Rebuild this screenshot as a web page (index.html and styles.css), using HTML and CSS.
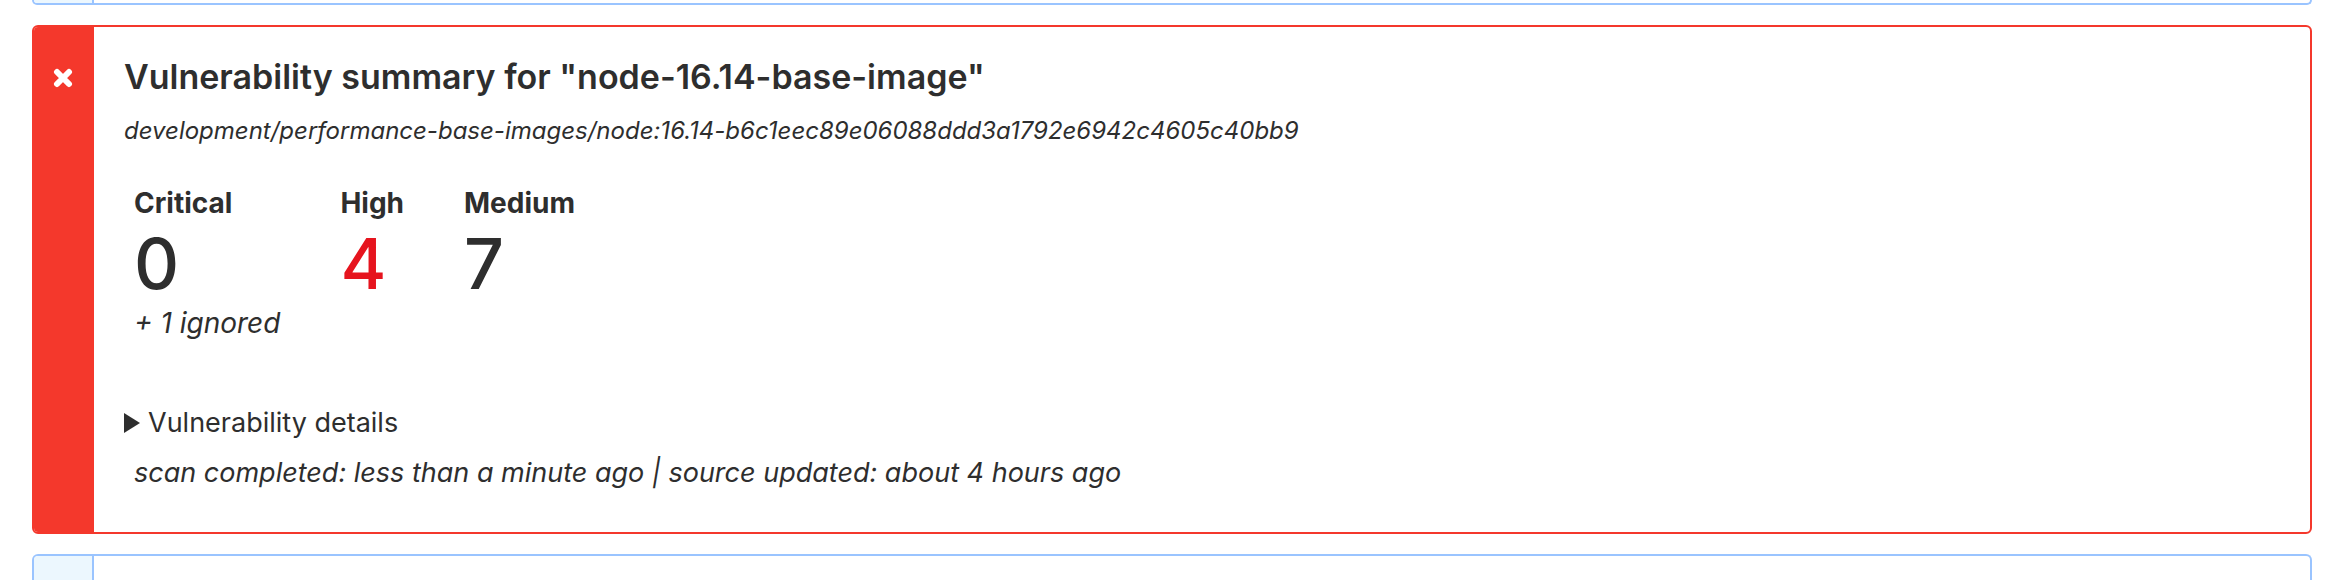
FILE: index.html
```html
<!DOCTYPE html>
<html lang="en">
<head>
<meta charset="utf-8">
<meta name="viewport" content="width=device-width, initial-scale=1">
<title>Vulnerability summary</title>
<link rel="stylesheet" href="styles.css">
</head>
<body>
<main class="annotations">
  <section class="card card-info card-before"><div class="card-side"></div></section>
  <section class="card card-error">
    <div class="card-side">
      <svg class="icon" viewBox="0 0 20 20" aria-hidden="true"><path d="M4 4 16 16M16 4 4 16"/></svg>
    </div>
    <div class="card-body">
      <h1 class="title">Vulnerability summary for "node-16.14-base-image"</h1>
      <p class="image-name">development/performance-base-images/node:16.14-b6c1eec89e06088ddd3a1792e6942c4605c40bb9</p>
      <table class="counts">
        <thead>
          <tr><th scope="col">Critical</th><th scope="col">High</th><th scope="col">Medium</th></tr>
        </thead>
        <tbody>
          <tr class="totals"><td>0</td><td class="alert">4</td><td>7</td></tr>
          <tr class="ignored"><td>+ 1 ignored</td><td></td><td></td></tr>
        </tbody>
      </table>
      <details class="details"><summary><svg class="marker" viewBox="0 0 16 20" aria-hidden="true"><path d="M0 0 16 10 0 20Z"/></svg>Vulnerability details</summary></details>
      <p class="scan">scan completed: less than a minute ago | source updated: about 4 hours ago</p>
    </div>
  </section>
  <section class="card card-info card-after"><div class="card-side"></div></section>
</main>
</body>
</html>
```

FILE: styles.css
```css
* { box-sizing: border-box; }

body {
  margin: 0;
  background: #fff;
  color: #2e2e2e;
  font-family: Inter, "Liberation Sans", sans-serif;
  font-size: 27px;
  line-height: 42px;
}

.annotations {
  display: flex;
  flex-direction: column;
  gap: 20px;
  min-height: 100vh;
  padding: 0 26px 0 32px;
}

.card {
  display: flex;
  border: 2px solid;
  border-radius: 6px;
}

.card-info { border-color: #9ac4ff; }
.card-error { border-color: #f4382c; }

.card-before {
  height: 5px;
  border-top: 0;
  border-top-left-radius: 0;
  border-top-right-radius: 0;
}

.card-after {
  flex: 1;
  border-bottom: 0;
  border-bottom-left-radius: 0;
  border-bottom-right-radius: 0;
}

.card-side {
  flex: none;
  display: flex;
  justify-content: center;
  width: 60px;
  border-radius: 4px 0 0 4px;
}

.card-info .card-side {
  border-right: 2px solid #9ac4ff;
  background: #ecf7fe;
}

.card-before .card-side { border-top-left-radius: 0; }
.card-after .card-side { border-bottom-left-radius: 0; }

.card-error .card-side {
  padding: 41px 2px 0 0;
  background: #f4382c;
}

.icon {
  width: 20px;
  height: 20px;
  fill: none;
  stroke: #fff;
  stroke-width: 6;
  stroke-linecap: round;
}

.card-body {
  flex: 1;
  padding: 28px 30px 38px;
}

.title {
  margin: 0;
  font-size: 34px;
  font-weight: 600;
  line-height: 44px;
}

.image-name {
  margin: 14px 0 32px;
  font-size: 24px;
  font-style: italic;
  line-height: 36px;
}

.counts {
  border-collapse: collapse;
  margin-bottom: 59px;
}

.counts th,
.counts td {
  padding: 0 50px 0 10px;
  text-align: left;
}

.counts th {
  font-size: 28px;
  font-weight: 700;
  line-height: 44px;
}

.counts .totals td {
  font-size: 70px;
  font-weight: 500;
  line-height: 78px;
}

.counts .totals .alert { color: #e6141e; }

.counts .ignored {
  font-size: 28px;
  font-style: italic;
  line-height: 40px;
}

.details summary {
  display: flex;
  align-items: center;
  gap: 8px;
  list-style: none;
}

.marker {
  width: 16px;
  height: 20px;
  fill: #2e2e2e;
}

.scan {
  margin: 8px 10px 0;
  font-style: italic;
}
```
